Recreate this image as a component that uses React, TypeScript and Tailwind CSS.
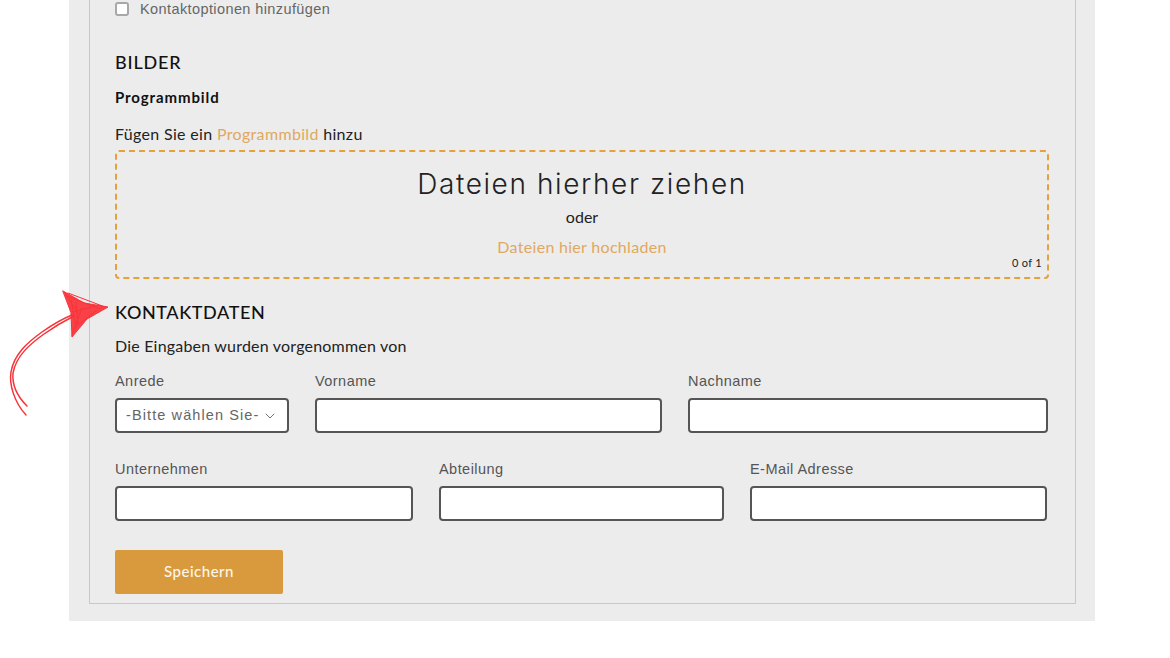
import { ChevronDown } from "lucide-react";

const Field = ({ label, className }: { label: string; className: string }) => (
	<div className={className}>
		<label className="block h-[26px] pt-[1px] font-['Liberation_Sans',sans-serif] text-[14.5px] leading-[17px] tracking-[0.45px] text-[#555]">
			{label}
		</label>
		<input className="block h-[35px] w-full rounded-[4px] border-2 border-[#555] bg-white" />
	</div>
);

const Arrow = () => (
	<svg
		className="absolute left-[8px] top-[288px]"
		width="104"
		height="130"
		viewBox="0 0 104 130"
		fill="none"
		stroke="#f8333a"
		strokeLinecap="round"
		strokeLinejoin="round"
	>
		<path d="M18 127C6 114 1 96 3 84C6 66 20 54 34 44C44 37 54 31 64 27" strokeWidth="1.5" />
		<path d="M19 118C9 108 4 96 5 85C8 68 22 56 36 46C46 39 56 33 66 28" strokeWidth="1.5" />
		<path d="M55 3L76 15L100 19L79 31L64 49L63 25Z" fill="#f8333a" fillOpacity="0.92" strokeWidth="1" />
		<path d="M56 4L70 25M60 5L97 19M64 47L74 20M63 12L68 40M59 8L92 21M68 14L70 36M66 40L88 23M66 24L90 17" strokeWidth="1" />
	</svg>
);

export default function App() {
	return (
		<div className="relative h-[658px] w-[1170px] overflow-hidden bg-white font-['Lato',sans-serif]">
			<div className="ml-[69px] h-[621px] w-[1026px] bg-[#ececec] px-5">
				<div className="h-[604px] w-[987px] border-x border-b border-[#c8c8c8] px-[25px]">
					<div className="flex h-[18px] items-center">
						<span className="mr-[11px] h-[14px] w-[14px] rounded-[3px] border-2 border-[#a8a8a8] bg-white" />
						<span className="pt-[1px] font-['Liberation_Sans',sans-serif] text-[14.5px] tracking-[0.4px] text-[#666]">
							Kontaktoptionen hinzufügen
						</span>
					</div>
					<h2 className="mt-[33px] text-[18px] leading-[22px] font-medium tracking-[0.8px] text-[#111]">BILDER</h2>
					<p className="mt-[15px] text-[15px] leading-[18px] font-bold tracking-[0.9px] text-[#111]">Programmbild</p>
					<p className="mt-[19px] text-[16px] leading-[18px] tracking-[0.33px] text-[#222]">
						Fügen Sie ein <span className="text-[#e0a860]">Programmbild</span> hinzu
					</p>
					<div className="relative mt-[7px] flex h-[129px] w-[934px] flex-col items-center rounded-[4px] border-2 border-dashed border-[#e5a23c]">
						<p className="mt-[14px] font-['Inter',sans-serif] text-[28px] leading-[36px] font-light tracking-[1.6px] text-[#222]">
							Dateien hierher ziehen
						</p>
						<p className="mt-[6px] text-[16px] leading-[18px] text-[#222]">oder</p>
						<p className="mt-[12px] text-[16px] leading-[18px] tracking-[0.3px] text-[#e0a860]">Dateien hier hochladen</p>
						<span className="absolute right-[5px] bottom-[8px] text-[11px] leading-[13px] tracking-[0.3px] text-[#222]">0 of 1</span>
					</div>
					<h2 className="mt-[22px] text-[18px] leading-[22px] font-medium tracking-[0.6px] text-[#111]">KONTAKTDATEN</h2>
					<p className="mt-[14px] text-[16px] leading-[18px] tracking-[0.2px] text-[#222]">Die Eingaben wurden vorgenommen von</p>
					<div className="mt-[17px] flex gap-[26px]">
						<div className="w-[174px]">
							<label className="block h-[26px] pt-[1px] font-['Liberation_Sans',sans-serif] text-[14.5px] leading-[17px] tracking-[0.45px] text-[#555]">
								Anrede
							</label>
							<div className="flex h-[35px] items-center justify-between rounded-[4px] border-2 border-[#555] bg-white pr-[11px] pl-[9px] font-['Liberation_Sans',sans-serif] text-[14.5px] tracking-[1.1px] whitespace-nowrap text-[#666]">
								<span>-Bitte wählen Sie-</span>
								<ChevronDown className="-mr-[2px] shrink-0" size={16} strokeWidth={1.4} />
							</div>
						</div>
						<Field label="Vorname" className="w-[347px]" />
						<Field label="Nachname" className="w-[360px]" />
					</div>
					<div className="mt-[27px] flex gap-[26px]">
						<Field label="Unternehmen" className="w-[298px]" />
						<Field label="Abteilung" className="w-[285px]" />
						<Field label="E-Mail Adresse" className="w-[297px]" />
					</div>
					<button className="mt-[29px] h-[44px] w-[168px] rounded-[2px] bg-[#d99a3d] pb-[2px] text-[15px] font-medium tracking-[0.5px] text-[#fdf6ea]">
						Speichern
					</button>
				</div>
			</div>
			<Arrow />
		</div>
	);
}
